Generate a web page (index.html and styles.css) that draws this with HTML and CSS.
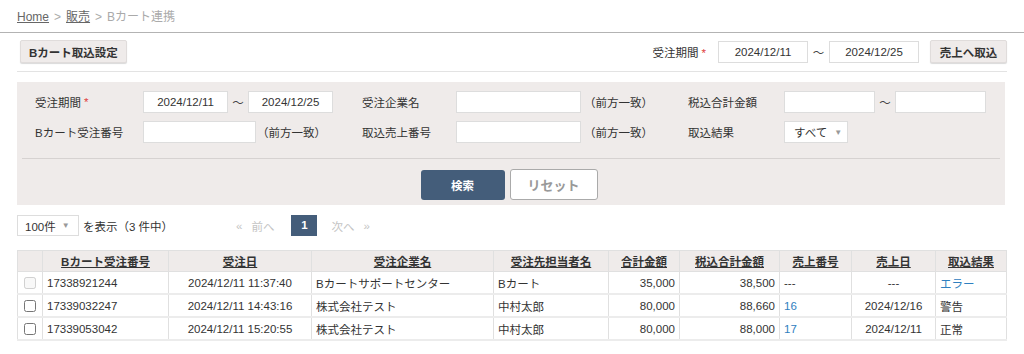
FILE: index.html
```html
<!DOCTYPE html>
<html lang="ja">
<head>
    <meta charset="UTF-8">
    <meta name="viewport" content="width=device-width, initial-scale=1.0">
    <title>Bカート連携</title>
    <link rel="stylesheet" href="styles.css">
</head>
<body>

    <!-- パンくず -->
    <div class="breadcrumb">
        <a href="#">Home</a><span class="sep">&gt;</span><a href="#">販売</a><span class="sep">&gt;</span><span class="current">Bカート連携</span>
    </div>

    <!-- ツールバー -->
    <div class="toolbar">
        <button type="button" class="btn-sub">Bカート取込設定</button>
        <div class="toolbar-right">
            <span class="label">受注期間<span class="req">*</span></span>
            <input type="text" class="date" value="2024/12/11">
            <span class="tilde">〜</span>
            <input type="text" class="date" value="2024/12/25">
            <button type="button" class="btn-sub btn-import">売上へ取込</button>
        </div>
    </div>

    <!-- 検索条件 -->
    <form class="search-panel">
        <div class="search-grid">
            <div class="cell label">受注期間<span class="req">*</span></div>
            <div class="cell">
                <input type="text" class="in-date" value="2024/12/11">
                <span class="tilde">〜</span>
                <input type="text" class="in-date" value="2024/12/25">
            </div>
            <div class="cell label">受注企業名</div>
            <div class="cell">
                <input type="text" class="in-name">
                <span class="note">（前方一致）</span>
            </div>
            <div class="cell label">税込合計金額</div>
            <div class="cell">
                <input type="text" class="in-amount">
                <span class="tilde">〜</span>
                <input type="text" class="in-amount">
            </div>

            <div class="cell label">Bカート受注番号</div>
            <div class="cell">
                <input type="text" class="in-no">
                <span class="note note-tight">（前方一致）</span>
            </div>
            <div class="cell label">取込売上番号</div>
            <div class="cell">
                <input type="text" class="in-name">
                <span class="note">（前方一致）</span>
            </div>
            <div class="cell label">取込結果</div>
            <div class="cell">
                <div class="select select-result">すべて<span class="arrow">▼</span></div>
            </div>
        </div>
        <div class="search-actions">
            <button type="button" class="btn-primary">検索</button>
            <button type="button" class="btn-reset">リセット</button>
        </div>
    </form>

    <!-- 件数・ページ -->
    <div class="pager">
        <div class="pager-left">
            <div class="select select-count">100件<span class="arrow">▼</span></div>
            <span>を表示（3 件中）</span>
        </div>
        <div class="pages">
            <span class="off">«</span><span class="off">前へ</span><span class="page-now">1</span><span class="off">次へ</span><span class="off">»</span>
        </div>
    </div>

    <table class="list">
        <colgroup>
            <col style="width: 25px">
            <col style="width: 126px">
            <col style="width: 143px">
            <col style="width: 182px">
            <col style="width: 115px">
            <col style="width: 71px">
            <col style="width: 100px">
            <col style="width: 72px">
            <col style="width: 84px">
            <col style="width: 71px">
        </colgroup>
        <thead>
            <tr>
                <th></th>
                <th><a href="#">Bカート受注番号</a></th>
                <th><a href="#">受注日</a></th>
                <th><a href="#">受注企業名</a></th>
                <th><a href="#">受注先担当者名</a></th>
                <th><a href="#">合計金額</a></th>
                <th><a href="#">税込合計金額</a></th>
                <th><a href="#">売上番号</a></th>
                <th><a href="#">売上日</a></th>
                <th><a href="#">取込結果</a></th>
            </tr>
        </thead>
        <tbody>
            <tr>
                <td class="chk"><input type="checkbox" disabled></td>
                <td>17338921244</td>
                <td class="center">2024/12/11 11:37:40</td>
                <td>Bカートサポートセンター</td>
                <td>Bカート</td>
                <td class="num">35,000</td>
                <td class="num">38,500</td>
                <td>---</td>
                <td class="center">---</td>
                <td><a href="#" class="link">エラー</a></td>
            </tr>
            <tr>
                <td class="chk"><input type="checkbox"></td>
                <td>17339032247</td>
                <td class="center">2024/12/11 14:43:16</td>
                <td>株式会社テスト</td>
                <td>中村太郎</td>
                <td class="num">80,000</td>
                <td class="num">88,660</td>
                <td><a href="#" class="link">16</a></td>
                <td class="center">2024/12/16</td>
                <td>警告</td>
            </tr>
            <tr>
                <td class="chk"><input type="checkbox"></td>
                <td>17339053042</td>
                <td class="center">2024/12/11 15:20:55</td>
                <td>株式会社テスト</td>
                <td>中村太郎</td>
                <td class="num">80,000</td>
                <td class="num">88,000</td>
                <td><a href="#" class="link">17</a></td>
                <td class="center">2024/12/11</td>
                <td>正常</td>
            </tr>
        </tbody>
    </table>

    <div class="pager pager-bottom">
        <div class="pager-left">
            <div class="select select-count">100件<span class="arrow">▼</span></div>
            <span>を表示（3 件中）</span>
        </div>
        <div class="pages">
            <span class="off">«</span><span class="off">前へ</span><span class="page-now">1</span><span class="off">次へ</span><span class="off">»</span>
        </div>
    </div>

</body>
</html>
```

FILE: styles.css
```css
body {
    margin: 0;
    font-family: "Liberation Sans", "Noto Sans CJK JP", sans-serif;
    font-size: 11.5px;
    color: #333333;
    background-color: #ffffff;
}

input, button {
    font-family: inherit;
    font-size: inherit;
    color: inherit;
}

.req {
    color: #e03c3c;
    margin-left: 3px;
}

.tilde {
    display: inline-block;
    width: 20px;
    text-align: center;
    color: #444444;
}

/* パンくず */
.breadcrumb {
    height: 32px;
    line-height: 34px;
    padding-left: 17px;
    border-bottom: 1px solid #b3b3b3;
    color: #aaaaaa;
    font-size: 12px;
}

.breadcrumb a {
    color: #666666;
    text-decoration: underline;
}

.breadcrumb .sep {
    margin: 0 5px;
}

/* ツールバー */
.toolbar {
    display: flex;
    justify-content: space-between;
    align-items: center;
    margin: 0 17px;
    padding: 7px 0 8px 3px;
    border-bottom: 1px solid #e3e3e3;
}

.btn-sub {
    height: 23px;
    padding: 0 8px;
    background-color: #efebea;
    border: 1px solid #e0dcdb;
    border-radius: 2px;
    box-shadow: 0 1px 1px rgba(0, 0, 0, 0.15);
    font-weight: bold;
    color: #333333;
    cursor: pointer;
}

.toolbar-right {
    display: flex;
    align-items: center;
}

.toolbar-right .label {
    margin-right: 12px;
}

.toolbar .date {
    width: 90px;
    height: 22px;
    box-sizing: border-box;
    border: 1px solid #dddddd;
    text-align: center;
    padding: 0;
}

.toolbar .tilde {
    width: 21px;
}

.btn-import {
    margin-left: 11px;
    width: 77px;
    padding: 0;
}

/* 検索条件 */
.search-panel {
    margin: 10px 17px 0;
    width: 988px;
    box-sizing: border-box;
    padding: 9px 18px 5px;
    background-color: #efebea;
}

.search-grid {
    display: grid;
    grid-template-columns: 108px 219px 94px 232px 96px auto;
    row-gap: 8px;
}

.search-grid .cell {
    display: flex;
    align-items: center;
    height: 22px;
    white-space: nowrap;
}

.search-grid input {
    height: 22px;
    box-sizing: border-box;
    border: 1px solid #dddddd;
    background-color: #ffffff;
    padding: 0 4px;
}

.search-grid .in-date {
    width: 85px;
    text-align: center;
}

.search-grid .in-name {
    width: 125px;
}

.search-grid .in-no {
    width: 113px;
}

.search-grid .in-amount {
    width: 91px;
}

.search-grid .note {
    margin-left: 3px;
}

.search-grid .note-tight {
    margin-left: 1px;
}

.select {
    display: flex;
    align-items: center;
    height: 22px;
    box-sizing: border-box;
    padding: 0 8px;
    background-color: #ffffff;
    border: 1px solid #dddddd;
    white-space: nowrap;
}

.select .arrow {
    font-size: 8px;
    color: #999999;
    margin-left: 7px;
}

.select-result {
    width: 64px;
    padding: 0 6px 0 9px;
}

.search-actions {
    display: flex;
    justify-content: center;
    gap: 5px;
    margin: 15px -13px 0;
    padding: 10px 4px 0 0;
    border-top: 1px solid #d6d2d1;
}

.btn-primary {
    width: 84px;
    height: 30px;
    margin-top: 1px;
    background-color: #445d7a;
    color: #ffffff;
    border: none;
    border-radius: 3px;
    font-weight: bold;
    cursor: pointer;
}

.btn-reset {
    width: 88px;
    height: 31px;
    background-color: #ffffff;
    color: #999999;
    border: 1px solid #aaaaaa;
    border-radius: 3px;
    font-size: 13px;
    font-weight: bold;
    cursor: pointer;
}

/* 件数・ページ */
.pager {
    display: flex;
    align-items: center;
    margin: 10px 17px 0;
    height: 21px;
}

.pager-left {
    display: flex;
    align-items: center;
    width: 219px;
}

.pager-left .select {
    width: 62px;
    height: 21px;
    padding: 0 7px;
    margin-right: 4px;
}

.pager-left .select .arrow {
    margin-left: 6px;
}

.pages {
    display: flex;
    align-items: center;
}

.pages .off {
    color: #c4c4c4;
    margin-right: 9px;
}

.page-now {
    display: inline-block;
    width: 26px;
    height: 21px;
    line-height: 21px;
    text-align: center;
    background-color: #445d7a;
    color: #ffffff;
    font-weight: bold;
    margin: 0 14px 0 8px;
}

/* 一覧 */
.list {
    margin: 14px 17px 0;
    border-collapse: collapse;
    table-layout: fixed;
    width: 989px;
}

.list th,
.list td {
    border: 1px solid #e0e0e0;
    padding: 0 4px;
    white-space: nowrap;
    overflow: hidden;
}

.list th {
    height: 20px;
    background-color: #efebea;
    font-weight: bold;
    text-align: center;
}

.list th a {
    color: #333333;
    text-decoration: underline;
}

.list td {
    height: 21px;
    border-bottom-width: 2px;
    border-bottom-color: #ececec;
}

.list td.chk {
    padding: 0;
    text-align: center;
}

.list td.chk input {
    margin: 0;
    width: 12px;
    height: 12px;
    vertical-align: middle;
}

.list .center {
    text-align: center;
}

.list .num {
    text-align: right;
}

.link {
    color: #2f80c0;
    text-decoration: none;
}

.pager-bottom {
    margin-top: 14px;
}
```
